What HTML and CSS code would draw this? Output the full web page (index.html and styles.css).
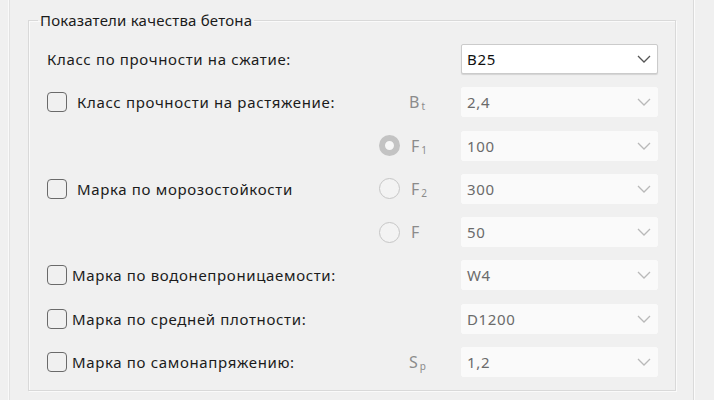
FILE: index.html
```html
<!DOCTYPE html>
<html lang="ru">
<head>
    <meta charset="UTF-8">
    <title>Показатели качества бетона</title>
    <link rel="stylesheet" href="styles.css">
</head>
<body>
    <div class="panel">
        <fieldset class="group">
            <legend>Показатели качества бетона</legend>
            <div class="grid">
                <div class="label">Класс по прочности на сжатие:</div>
                <div class="sym"></div>
                <div class="select">
                    <span>B25</span>
                    <svg class="chev" width="14" height="8" viewBox="0 0 14 8"><path d="M1 1l6 6 6-6" fill="none" stroke="currentColor" stroke-width="1.3"/></svg>
                </div>

                <label class="label wide"><span class="check"></span>Класс прочности на растяжение:</label>
                <div class="sym"><span>B<sub>t</sub></span></div>
                <div class="select off">
                    <span>2,4</span>
                    <svg class="chev" width="14" height="8" viewBox="0 0 14 8"><path d="M1 1l6 6 6-6" fill="none" stroke="currentColor" stroke-width="1.3"/></svg>
                </div>

                <label class="label wide frost"><span class="check"></span>Марка по морозостойкости</label>
                <div class="sym radio-row"><span class="radio on"></span><span>F<sub>1</sub></span></div>
                <div class="select off">
                    <span>100</span>
                    <svg class="chev" width="14" height="8" viewBox="0 0 14 8"><path d="M1 1l6 6 6-6" fill="none" stroke="currentColor" stroke-width="1.3"/></svg>
                </div>
                <div class="sym radio-row"><span class="radio"></span><span>F<sub>2</sub></span></div>
                <div class="select off">
                    <span>300</span>
                    <svg class="chev" width="14" height="8" viewBox="0 0 14 8"><path d="M1 1l6 6 6-6" fill="none" stroke="currentColor" stroke-width="1.3"/></svg>
                </div>
                <div class="sym radio-row"><span class="radio"></span><span>F</span></div>
                <div class="select off">
                    <span>50</span>
                    <svg class="chev" width="14" height="8" viewBox="0 0 14 8"><path d="M1 1l6 6 6-6" fill="none" stroke="currentColor" stroke-width="1.3"/></svg>
                </div>

                <label class="label"><span class="check"></span>Марка по водонепроницаемости:</label>
                <div class="sym"></div>
                <div class="select off">
                    <span>W4</span>
                    <svg class="chev" width="14" height="8" viewBox="0 0 14 8"><path d="M1 1l6 6 6-6" fill="none" stroke="currentColor" stroke-width="1.3"/></svg>
                </div>

                <label class="label"><span class="check"></span>Марка по средней плотности:</label>
                <div class="sym"></div>
                <div class="select off">
                    <span>D1200</span>
                    <svg class="chev" width="14" height="8" viewBox="0 0 14 8"><path d="M1 1l6 6 6-6" fill="none" stroke="currentColor" stroke-width="1.3"/></svg>
                </div>

                <label class="label"><span class="check"></span>Марка по самонапряжению:</label>
                <div class="sym"><span>S<sub>p</sub></span></div>
                <div class="select off">
                    <span>1,2</span>
                    <svg class="chev" width="14" height="8" viewBox="0 0 14 8"><path d="M1 1l6 6 6-6" fill="none" stroke="currentColor" stroke-width="1.3"/></svg>
                </div>
            </div>
        </fieldset>
    </div>
</body>
</html>
```

FILE: styles.css
```css
body {
    margin: 0;
    background-color: #f0f0f0;
    font-family: "Noto Sans", "Open Sans", sans-serif;
    font-size: 15px;
    letter-spacing: 0.65px;
    color: #1b1b1b;
}
.panel {
    margin-left: 8px;
    width: 686px;
    height: 400px;
    box-sizing: border-box;
    border-left: 1px solid #fafafa;
    border-right: 1px solid #dadada;
    box-shadow: inset 1px 0 0 #e2e2e2, 1px 0 0 #fbfbfb;
    padding: 12px 0 0 19px;
}
.group {
    margin: 0;
    width: 648px;
    height: 379px;
    box-sizing: border-box;
    border: 1px solid #d9d9d9;
    box-shadow: inset 1px 1px 0 #fafafa, 1px 1px 0 #fafafa;
    padding: 16px 17px 0 18px;
}
.group legend {
    padding: 0 2px;
    margin-left: -9px;
    line-height: 16px;
    font-size: 15px;
    letter-spacing: 0.2px;
}
.grid {
    display: grid;
    grid-template-columns: 1fr 82px 197px;
    grid-auto-rows: 30px;
    row-gap: 13.3px;
}
.label {
    display: flex;
    align-items: center;
    gap: 5px;
    white-space: nowrap;
}
.label.wide {
    gap: 10px;
}
.label.frost {
    grid-row: span 3;
}
.check {
    width: 20px;
    height: 20px;
    box-sizing: border-box;
    border: 1px solid #6a6a6a;
    border-radius: 4px;
    flex: none;
}
.sym {
    display: flex;
    align-items: center;
    gap: 11px;
    color: #8b8b8b;
    font-size: 16px;
    letter-spacing: 0;
    padding-left: 30px;
}
.sym.radio-row {
    padding-left: 0;
}
.sym sub {
    font-size: 10px;
    vertical-align: -2px;
    margin-left: 2px;
}
.radio {
    width: 21px;
    height: 21px;
    box-sizing: border-box;
    border-radius: 50%;
    border: 1px solid #c6c6c6;
    background-color: #f3f3f3;
    flex: none;
}
.radio.on {
    border: 6px solid #c3c3c3;
    background-color: #f7f7f7;
}
.select {
    display: flex;
    align-items: center;
    justify-content: space-between;
    box-sizing: border-box;
    padding: 0 6px 0 5px;
    background-color: #fff;
    border: 1px solid #cbcbcb;
    border-radius: 2px;
    box-shadow: 0 1px 1px rgba(0, 0, 0, 0.12);
    color: #111;
}
.select .chev {
    color: #555;
}
.select.off {
    background-color: #fafafa;
    border-color: #fafafa;
    box-shadow: none;
    color: #6b6b6b;
}
.select.off .chev {
    color: #b9b9b9;
}
```
